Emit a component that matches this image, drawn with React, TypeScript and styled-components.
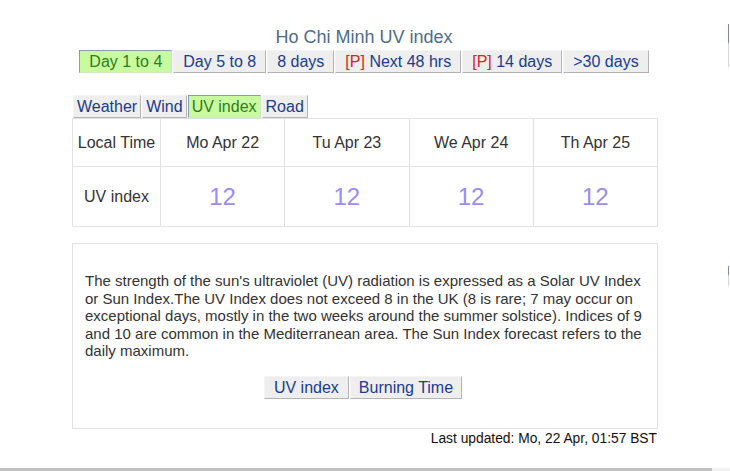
import styled, { createGlobalStyle, css } from "styled-components";

const days = ["Mo Apr 22", "Tu Apr 23", "We Apr 24", "Th Apr 25"];
const uv = [12, 12, 12, 12];

const rangeTabs = [
  { label: "Day 1 to 4", active: true },
  { label: "Day 5 to 8" },
  { label: "8 days" },
  { label: "Next 48 hrs", premium: true },
  { label: "14 days", premium: true },
  { label: ">30 days" },
];

const kindTabs = [
  { label: "Weather" },
  { label: "Wind" },
  { label: "UV index", active: true },
  { label: "Road" },
];

function App() {
  return (
    <>
      <GlobalStyle />
      <Page>
        <Title>Ho Chi Minh UV index</Title>
        <RangeBar>
          {rangeTabs.map((t) => (
            <Tab key={t.label} $active={t.active} $pad={9}>
              {t.premium ? <Premium>[P] </Premium> : null}
              {t.label}
            </Tab>
          ))}
        </RangeBar>
        <KindBar>
          {kindTabs.map((t) => (
            <Tab key={t.label} $active={t.active} $pad={3}>
              {t.label}
            </Tab>
          ))}
        </KindBar>
        <Table>
          <tbody>
            <HeadRow>
              <LabelCell>Local Time</LabelCell>
              {days.map((d) => (
                <DayCell key={d}>{d}</DayCell>
              ))}
            </HeadRow>
            <ValueRow>
              <LabelCell>UV index</LabelCell>
              {uv.map((v, i) => (
                <ValueCell key={i}>{v}</ValueCell>
              ))}
            </ValueRow>
          </tbody>
        </Table>
        <InfoBox>
          <Text>
            The strength of the sun's ultraviolet (UV) radiation is expressed as a
            Solar UV Index or Sun Index.The UV Index does not exceed 8 in the UK (8
            is rare; 7 may occur on exceptional days, mostly in the two weeks
            around the summer solstice). Indices of 9 and 10 are common in the
            Mediterranean area. The Sun Index forecast refers to the daily maximum.
          </Text>
          <InfoButtons>
            <Tab $pad={9}>UV index</Tab>
            <Tab $pad={8}>Burning Time</Tab>
          </InfoButtons>
        </InfoBox>
        <Updated>Last updated: Mo, 22 Apr, 01:57 BST</Updated>
      </Page>
      <EdgeMark $top={24} $height={43} />
      <EdgeMark $top={266} $height={20} />
      <ScrollTrack>
        <ScrollThumb />
      </ScrollTrack>
    </>
  );
}

export default App;

const GlobalStyle = createGlobalStyle`
  html, body {
    margin: 0;
    padding: 0;
    background: #ffffff;
    font-family: "Liberation Sans", Arial, sans-serif;
    overflow: hidden;
  }
`;

const Page = styled.div`
  width: 586px;
  margin: 0 auto;
  padding-top: 26px;
  display: flex;
  flex-direction: column;
`;

const Title = styled.div`
  text-align: center;
  font-size: 18px;
  line-height: 22px;
  color: #4f6b8c;
  margin-left: -2px;
`;

const RangeBar = styled.div`
  display: flex;
  justify-content: center;
  gap: 1px;
  margin-top: 2px;
  margin-left: -2px;
`;

const KindBar = styled.div`
  display: flex;
  gap: 1px;
  margin-top: 22px;
  margin-left: 1px;
`;

const Tab = styled.span<{ $active?: boolean; $pad: number }>`
  display: inline-block;
  white-space: pre;
  height: 23px;
  line-height: 21px;
  box-sizing: border-box;
  padding: 0 ${(p) => p.$pad}px;
  font-size: 16px;
  color: #1b3b8e;
  background: #eeeeee;
  border: 1px solid;
  border-color: #f4f4f4 #b4b4b4 #b4b4b4 #f4f4f4;
  cursor: pointer;
  ${(p) =>
    p.$active &&
    css`
      background: #c8fba0;
      color: #2f7d18;
      border-color: #8a9bb0 #d0e8c0 #d0e8c0 #8a9bb0;
    `}
`;

const Premium = styled.span`
  color: #e0201e;
  white-space: pre;
`;

const Table = styled.table`
  width: 586px;
  border-collapse: collapse;
  margin-top: 0;
  table-layout: fixed;
  border: 1px solid #e2e2e2;
  color: #333333;
  font-size: 16px;
`;

const HeadRow = styled.tr`
  height: 48px;
`;

const ValueRow = styled.tr`
  height: 60px;
`;

const LabelCell = styled.td`
  width: 87px;
  text-align: center;
  border: 1px solid #e2e2e2;
  padding: 0;
  white-space: nowrap;
`;

const DayCell = styled.td`
  text-align: center;
  border: 1px solid #e2e2e2;
  padding: 0;
`;

const ValueCell = styled.td`
  text-align: center;
  border: 1px solid #e2e2e2;
  padding: 0;
  font-size: 24px;
  color: #9a8cf3;
`;

const InfoBox = styled.div`
  margin-top: 16px;
  border: 1px solid #e2e2e2;
  padding: 28px 12px 28px 12px;
  display: flex;
  flex-direction: column;
  align-items: center;
  height: 186px;
  box-sizing: border-box;
`;

const Text = styled.p`
  margin: 0;
  font-size: 15px;
  line-height: 17.5px;
  color: #333333;
  align-self: stretch;
`;

const InfoButtons = styled.div`
  display: flex;
  gap: 1px;
  margin-top: 16px;
  margin-left: -4px;
`;

const Updated = styled.div`
  text-align: right;
  font-size: 13.8px;
  line-height: 18px;
  color: #111111;
  margin-top: 1px;
  padding-right: 1px;
`;

const EdgeMark = styled.div<{ $top: number; $height: number }>`
  position: fixed;
  right: 1px;
  top: ${(p) => p.$top}px;
  width: 1px;
  height: ${(p) => p.$height}px;
  background: linear-gradient(#7d8ca3 0 45%, #d6d6d6 45% 100%);
`;

const ScrollTrack = styled.div`
  position: fixed;
  left: 0;
  right: 0;
  bottom: 0;
  height: 3px;
  background: #f1f1f1;
`;

const ScrollThumb = styled.div`
  width: 712px;
  height: 100%;
  background: #c1c1c1;
`;
